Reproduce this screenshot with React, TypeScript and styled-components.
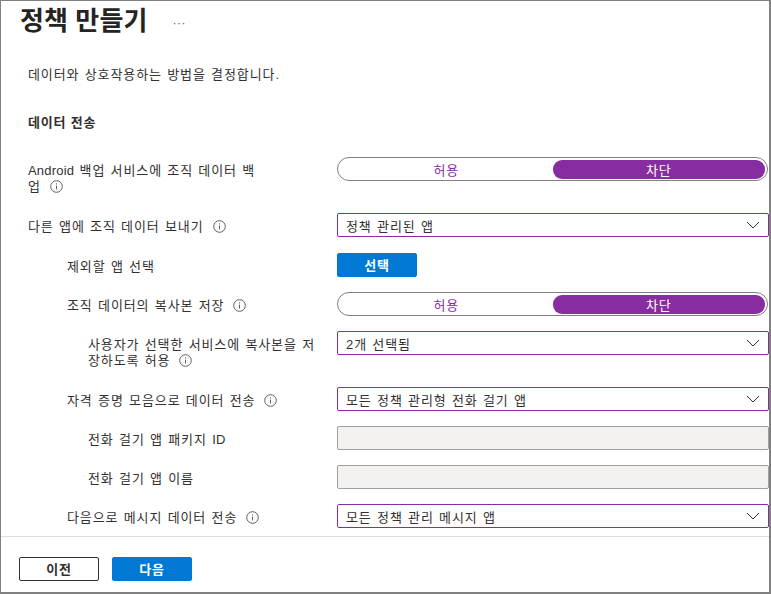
import React from "react";
import styled, { createGlobalStyle } from "styled-components";

const GlobalStyle = createGlobalStyle`
    html, body {
        margin: 0;
        padding: 0;
        background: #fff;
    }
    body {
        font-family: "Liberation Sans", "Noto Sans CJK KR", sans-serif;
        font-size: 13px;
        letter-spacing: 0.9px;
        word-spacing: 0.8px;
        color: #323130;
    }
`;

const Blade = styled.div`
    width: 771px;
    height: 594px;
    box-sizing: border-box;
    border: 1px solid #808080;
    border-bottom-width: 2px;
    border-right-width: 2px;
    display: flex;
    flex-direction: column;
    overflow: hidden;
`;

const Header = styled.header`
    display: flex;
    align-items: center;
    height: 40px;
    box-sizing: border-box;
    padding: 0 0 5px 19px;
`;

const Title = styled.h1`
    margin: 0;
    font-size: 26px;
    font-weight: 600;
    letter-spacing: 0.1px;
    word-spacing: 0;
    color: #252423;
`;

const More = styled.span`
    margin: 8px 0 0 25px;
    font-size: 12px;
    letter-spacing: 0.5px;
    color: #605e5c;
`;

const Content = styled.main`
    flex: 1;
    padding: 26px 0 0 27px;
`;

const Intro = styled.p`
    margin: 0;
    height: 16px;
    line-height: 16px;
`;

const Section = styled.h2`
    margin: 32px 0 0;
    height: 16px;
    line-height: 16px;
    font-size: 13px;
    font-weight: 700;
    letter-spacing: 0.8px;
    word-spacing: 0;
`;

const Rows = styled.div`
    margin-top: 26px;
    display: flex;
    flex-direction: column;
`;

const Row = styled.div<{ $height: number }>`
    display: grid;
    grid-template-columns: 309px 432px;
    align-items: start;
    height: ${props => props.$height}px;
`;

const Label = styled.div<{ $indent?: number }>`
    padding-left: ${props => props.$indent || 0}px;
    padding-top: 6px;
    width: 230px;
    line-height: 16px;
`;

const Latin = styled.span`
    letter-spacing: 0.2px;
`;

const Toggle = styled.div`
    height: 24px;
    width: 431px;
    box-sizing: border-box;
    border: 1px solid #808080;
    border-radius: 12px;
    padding: 2px;
    display: grid;
    grid-template-columns: 1fr 1fr;
`;

const ToggleOption = styled.div<{ $on?: boolean }>`
    display: flex;
    align-items: center;
    justify-content: center;
    border-radius: 9px;
    background: ${props => (props.$on ? "#882ca1" : "transparent")};
    color: ${props => (props.$on ? "#fff" : "#882ca1")};
`;

const Select = styled.div<{ $disabled?: boolean }>`
    height: 24px;
    box-sizing: border-box;
    border: 1px solid ${props => (props.$disabled ? "#a19f9d" : "#882ca1")};
    border-radius: 2px;
    background: ${props => (props.$disabled ? "#f3f2f1" : "#fff")};
    padding: 0 8px;
    display: flex;
    align-items: center;
    justify-content: space-between;
`;

const Button = styled.button<{ $primary?: boolean }>`
    width: 80px;
    height: 24px;
    box-sizing: border-box;
    border-radius: 2px;
    border: 1px solid ${props => (props.$primary ? "#0078d4" : "#323130")};
    background: ${props => (props.$primary ? "#0078d4" : "#fff")};
    color: ${props => (props.$primary ? "#fff" : "#323130")};
    font: inherit;
    font-weight: 700;
    letter-spacing: inherit;
    padding: 0 0 2px;
`;

const Footer = styled.footer`
    height: 56px;
    box-sizing: border-box;
    flex-shrink: 0;
    border-top: 1px solid #e1dfdd;
    display: flex;
    align-items: flex-start;
    gap: 13px;
    padding: 20px 0 0 18px;
`;

const InfoMark = styled.svg`
    width: 13px;
    height: 13px;
    margin-left: 9px;
    vertical-align: -2px;
`;

function Info() {
    return (
        <InfoMark viewBox="0 0 13 13">
            <circle cx="6.5" cy="6.5" r="5.8" fill="none" stroke="#605e5c" />
            <path d="M6.5 5.6v3.8M6.5 3.4v1.1" stroke="#605e5c" fill="none" />
        </InfoMark>
    );
}

function Chevron() {
    return (
        <svg width="14" height="8" viewBox="0 0 14 8">
            <path d="M1 1l6 6 6-6" fill="none" stroke="#323130" />
        </svg>
    );
}

function AllowBlock() {
    return (
        <Toggle>
            <ToggleOption>허용</ToggleOption>
            <ToggleOption $on>차단</ToggleOption>
        </Toggle>
    );
}

function Dropdown({ value }: { value: string }) {
    return (
        <Select>
            {value}
            <Chevron />
        </Select>
    );
}

function App() {
    return (
        <>
            <GlobalStyle />
            <Blade>
                <Header>
                    <Title>정책 만들기</Title>
                    <More>···</More>
                </Header>
                <Content>
                    <Intro>데이터와 상호작용하는 방법을 결정합니다.</Intro>
                    <Section>데이터 전송</Section>
                    <Rows>
                        <Row $height={56}>
                            <Label><Latin>Android</Latin> 백업 서비스에 조직 데이터 백업<Info /></Label>
                            <AllowBlock />
                        </Row>
                        <Row $height={40}>
                            <Label>다른 앱에 조직 데이터 보내기<Info /></Label>
                            <Dropdown value="정책 관리된 앱" />
                        </Row>
                        <Row $height={39}>
                            <Label $indent={39}>제외할 앱 선택</Label>
                            <Button $primary>선택</Button>
                        </Row>
                        <Row $height={39}>
                            <Label $indent={39}>조직 데이터의 복사본 저장<Info /></Label>
                            <AllowBlock />
                        </Row>
                        <Row $height={56}>
                            <Label $indent={60}>사용자가 선택한 서비스에 복사본을 저장하도록 허용<Info /></Label>
                            <Dropdown value="2개 선택됨" />
                        </Row>
                        <Row $height={39}>
                            <Label $indent={39}>자격 증명 모음으로 데이터 전송<Info /></Label>
                            <Dropdown value="모든 정책 관리형 전화 걸기 앱" />
                        </Row>
                        <Row $height={39}>
                            <Label $indent={60}>전화 걸기 앱 패키지 <Latin>ID</Latin></Label>
                            <Select $disabled />
                        </Row>
                        <Row $height={39}>
                            <Label $indent={60}>전화 걸기 앱 이름</Label>
                            <Select $disabled />
                        </Row>
                        <Row $height={30}>
                            <Label $indent={39}>다음으로 메시지 데이터 전송<Info /></Label>
                            <Dropdown value="모든 정책 관리 메시지 앱" />
                        </Row>
                    </Rows>
                </Content>
                <Footer>
                    <Button>이전</Button>
                    <Button $primary>다음</Button>
                </Footer>
            </Blade>
        </>
    );
}

export default App;
